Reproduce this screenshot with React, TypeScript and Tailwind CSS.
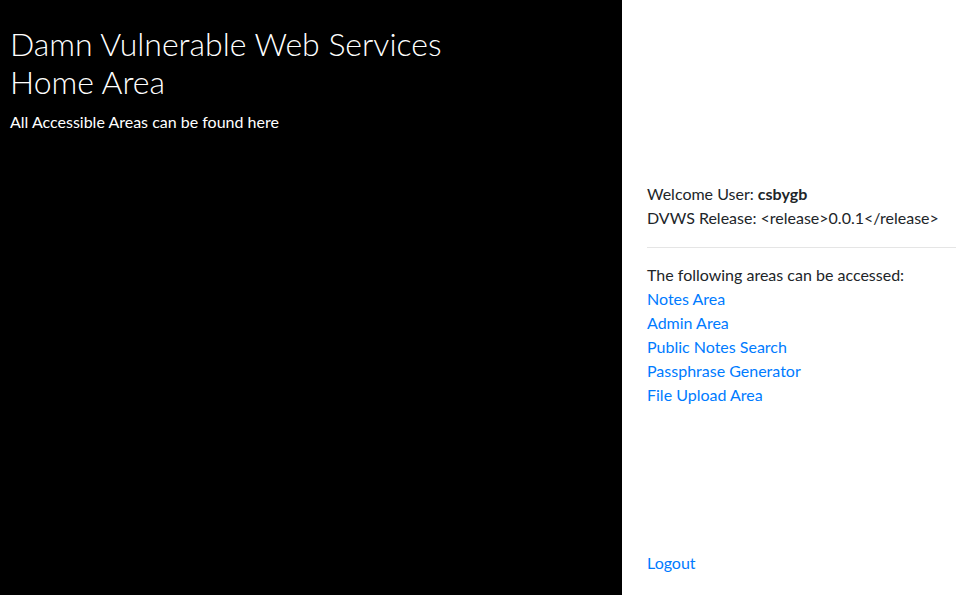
const LINKS = [
  "Notes Area",
  "Admin Area",
  "Public Notes Search",
  "Passphrase Generator",
  "File Upload Area",
];

export default function App() {
  return (
    <div
      className="flex h-[595px] w-full bg-white text-[16px] leading-6 text-[#212529]"
      style={{ fontFamily: "Lato, 'Liberation Sans', sans-serif" }}
    >
      {/* Left banner */}
      <div className="w-[622px] shrink-0 bg-black px-[10px] pt-[25px] text-white">
        <h1 className="text-[32px] font-light leading-[38px]">
          Damn Vulnerable Web Services
          <br />
          Home Area
        </h1>
        <p className="mt-[9px] text-[16px] leading-6">
          All Accessible Areas can be found here
        </p>
      </div>

      {/* Right side */}
      <div className="flex flex-1 flex-col pl-[25px] pt-[182px] pb-[20px]">
        <div>
          <p>
            Welcome User: <b className="font-bold">csbygb</b>
          </p>
          <p>DVWS Release: &lt;release&gt;0.0.1&lt;/release&gt;</p>
        </div>
        <hr className="mt-[17px] mb-[15px] border-t border-[#e5e5e5]" />
        <div>
          <p>The following areas can be accessed:</p>
          {LINKS.map((l) => (
            <a key={l} href="#" className="block text-[#007bff]">
              {l}
            </a>
          ))}
        </div>
        <div className="mt-auto">
          <a href="#" className="text-[#007bff]">
            Logout
          </a>
        </div>
      </div>
    </div>
  );
}
